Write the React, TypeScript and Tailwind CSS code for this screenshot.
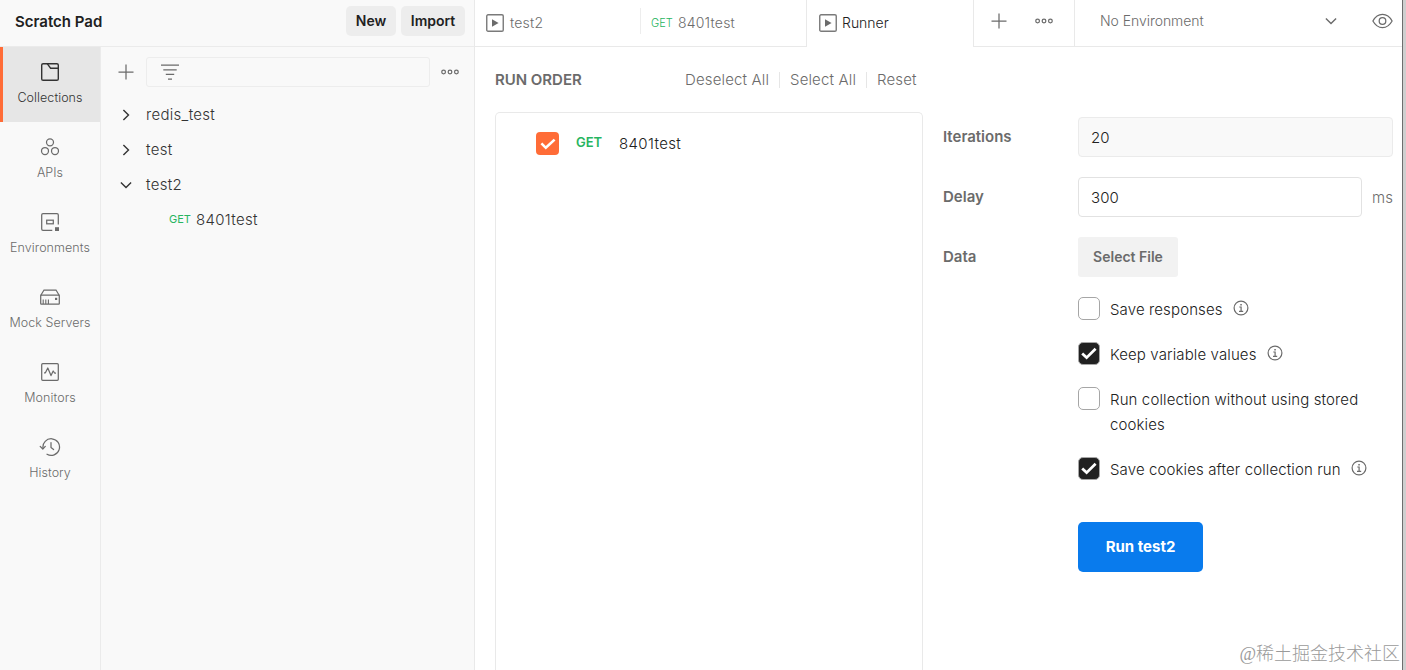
import type { ReactNode } from 'react';

type NavItem = { label: string; icon: ReactNode; active?: boolean };

const stroke = { fill: 'none', stroke: 'currentColor', strokeWidth: 1.25 } as const;

function CollectionsIcon() {
  return (
    <svg width="20" height="20" viewBox="0 0 20 20" {...stroke} strokeWidth={1.4}>
      <rect x="1.7" y="1.7" width="16.6" height="16.6" rx="1.4" />
      <path d="M7.2 1.7 L10.6 6.2 H18.3" />
    </svg>
  );
}

function ApisIcon() {
  return (
    <svg width="20" height="20" viewBox="0 0 20 20" {...stroke}>
      <circle cx="10" cy="5.3" r="3.5" />
      <circle cx="5" cy="14" r="3.5" />
      <circle cx="15" cy="14" r="3.5" />
    </svg>
  );
}

function EnvironmentsIcon() {
  return (
    <svg width="20" height="20" viewBox="0 0 20 20" {...stroke}>
      <path d="M12.3 18.3 H3 Q1.7 18.3 1.7 17 V3 Q1.7 1.7 3 1.7 H17 Q18.3 1.7 18.3 3 V12.5" />
      <rect x="6.7" y="8.2" width="6.6" height="3.6" />
      <rect x="15" y="15.2" width="4" height="3.8" fill="currentColor" stroke="none" />
    </svg>
  );
}

function MockServersIcon() {
  return (
    <svg width="22" height="20" viewBox="0 0 22 20" {...stroke}>
      <path d="M1.7 8.5 L5 3 H17 L20.3 8.5" />
      <rect x="1.7" y="8.2" width="18.6" height="8.8" rx="0.6" />
      <path d="M4.2 12.5 V17 M6.8 12.5 V17 M9.4 12.5 V17" strokeWidth="1.1" />
      <rect x="16" y="10.8" width="2.2" height="2.2" fill="currentColor" stroke="none" />
    </svg>
  );
}

function MonitorsIcon() {
  return (
    <svg width="20" height="20" viewBox="0 0 20 20" {...stroke}>
      <rect x="1.7" y="1.7" width="16.6" height="16.6" rx="1" />
      <path d="M4 10.8 H5.4 L7.8 6 L11 13.6 L13.2 9 L14.6 11 H16" strokeLinejoin="round" />
    </svg>
  );
}

function HistoryIcon() {
  return (
    <svg width="22" height="20" viewBox="0 0 22 20" {...stroke} strokeLinecap="round" strokeLinejoin="round">
      <path d="M4 11.2 A8.3 8.3 0 1 1 8 17.2" />
      <path d="M1.2 9.4 L3.8 12 L6.3 9.4" />
      <path d="M12 5.6 V10.6 L14.6 12.6" />
    </svg>
  );
}

function PlusIcon() {
  return (
    <svg width="16" height="16" viewBox="0 0 16 16" fill="none" stroke="#6b6b6b" strokeWidth="1.25">
      <path d="M8 0.5 V15.5 M0.5 8 H15.5" />
    </svg>
  );
}

function DotsIcon() {
  return (
    <svg width="18" height="6" viewBox="0 0 18 6" fill="none" stroke="#6b6b6b" strokeWidth="1.25">
      <circle cx="2.6" cy="3" r="1.85" />
      <circle cx="9" cy="3" r="1.85" />
      <circle cx="15.4" cy="3" r="1.85" />
    </svg>
  );
}

function PlayIcon() {
  return (
    <svg width="18" height="18" viewBox="0 0 18 18" className="shrink-0">
      <rect x="0.75" y="0.75" width="16.5" height="16.5" rx="1.3" fill="none" stroke="#7a7a7a" strokeWidth="1.4" />
      <path d="M6 5.2 L12.6 9 L6 12.8 Z" fill="#6b6b6b" />
    </svg>
  );
}

function Chevron({ open, color = '#333333' }: { open?: boolean; color?: string }) {
  return (
    <svg width="12" height="12" viewBox="0 0 12 12" fill="none" stroke={color} strokeWidth="1.4">
      <path d={open ? 'M0.9 3.4 L6 8.5 L11.1 3.4' : 'M3.4 0.9 L8.5 6 L3.4 11.1'} />
    </svg>
  );
}

function InfoIcon() {
  return (
    <svg width="16" height="16" viewBox="0 0 16 16" fill="none" stroke="#6b6b6b" strokeWidth="1.2" className="shrink-0">
      <circle cx="8" cy="8" r="6.9" />
      <path d="M6.3 7 H8.1 V11.2 M6 11.4 H10.2" />
      <rect x="7.3" y="4" width="1.5" height="1.5" fill="#6b6b6b" stroke="none" />
    </svg>
  );
}

function Check({ on }: { on?: boolean }) {
  return (
    <span
      className={
        on
          ? 'flex h-[23px] w-[22px] shrink-0 items-center justify-center rounded-[5px] border border-[#a6a6a6] bg-[#212121] pb-px pr-px'
          : 'h-[23px] w-[22px] shrink-0 rounded-[5px] border border-[#a6a6a6] bg-white'
      }
    >
      {on && (
        <svg width="16" height="13" viewBox="0 0 16 13" fill="none" stroke="#fff" strokeWidth="2.7">
          <path d="M1.2 6.4 L5.6 10.6 L14.6 1.8" />
        </svg>
      )}
    </span>
  );
}

const nav: NavItem[] = [
  { label: 'Collections', icon: <CollectionsIcon />, active: true },
  { label: 'APIs', icon: <ApisIcon /> },
  { label: 'Environments', icon: <EnvironmentsIcon /> },
  { label: 'Mock Servers', icon: <MockServersIcon /> },
  { label: 'Monitors', icon: <MonitorsIcon /> },
  { label: 'History', icon: <HistoryIcon /> },
];

const tree = [
  { name: 'redis_test', open: false },
  { name: 'test', open: false },
  { name: 'test2', open: true },
];

function Sidebar() {
  return (
    <aside className="flex w-[475px] shrink-0 flex-col border-r border-[#e9e9e9] bg-[#f9f9f9]">
      <header className="flex h-[47px] shrink-0 items-start border-b border-[#ebebeb] pl-[15px] pr-[9px]">
        <h1 className="mt-3 flex-1 text-[15px] font-semibold leading-5 text-[#212121]">Scratch Pad</h1>
        <div className="mt-[6px] flex gap-[5px] text-[14px] font-semibold leading-[30px] text-[#212121]">
          <button className="h-[30px] w-[50px] rounded-[5px] bg-[#ededed]">New</button>
          <button className="h-[30px] w-16 rounded-[5px] bg-[#ededed]">Import</button>
        </div>
      </header>
      <div className="flex min-h-0 flex-1">
        <nav className="w-[101px] shrink-0 border-r border-[#ebebeb]">
          {nav.map((item) => (
            <a
              key={item.label}
              className={
                item.active
                  ? 'flex h-[75px] flex-col items-center border-l-[3px] border-[#ff6c37] bg-[#e6e6e6] pr-[3px] pt-[15px] text-[#333333]'
                  : 'flex h-[75px] flex-col items-center pt-[15px] text-[#6b6b6b]'
              }
            >
              {item.icon}
              <span className="mt-[6px] whitespace-nowrap text-[12.5px] leading-5 tracking-[0.06px]">{item.label}</span>
            </a>
          ))}
        </nav>
        <div className="flex-1">
          <div className="flex items-center pl-[17px] pr-[15px] pt-[10px]">
            <PlusIcon />
            <div className="ml-3 flex h-[30px] w-[284px] items-center rounded-[3px] border border-[#ededed] pl-[14px]">
              <svg width="18" height="16" viewBox="0 0 18 16" stroke="#6b6b6b" strokeWidth="1.25">
                <path d="M0 1.2 H18 M2.3 5.8 H15.7 M4.8 10.4 H13.2 M7 15 H11" />
              </svg>
            </div>
            <div className="ml-[11px] flex">
              <DotsIcon />
            </div>
          </div>
          <ul className="mt-[10px] text-[15px] leading-[35px] tracking-[0.3px] text-[#333333]">
            {tree.map((node) => (
              <li key={node.name} className="flex h-[35px] items-center gap-[14px] pl-[19px]">
                <Chevron open={node.open} />
                <span>{node.name}</span>
              </li>
            ))}
            <li className="flex h-[35px] items-center pl-[68px]">
              <span className="w-[27px] text-[11px] font-normal tracking-normal text-[#27b561]">GET</span>
              <span>8401test</span>
            </li>
          </ul>
        </div>
      </div>
    </aside>
  );
}

function TabBar() {
  return (
    <div className="flex h-[47px] shrink-0 text-[14px] leading-[46px] text-[#6b6b6b]">
      <div className="flex w-[332px] border-b border-r border-[#e9e9e9] tracking-[0.2px]">
        <div className="flex w-[165px] items-center gap-[6px] pl-[11px]">
          <PlayIcon />
          <span>test2</span>
        </div>
        <div className="mt-2 h-[26px] w-px bg-[#ededed]" />
        <div className="flex flex-1 items-center pl-[10px]">
          <span className="w-[27px] text-[11px] tracking-normal text-[#27b561]">GET</span>
          <span>8401test</span>
        </div>
      </div>
      <div className="flex w-[166px] items-center gap-[5px] pb-px pl-3 text-[#212121]">
        <PlayIcon />
        <span>Runner</span>
      </div>
      <div className="flex w-[102px] items-center gap-7 border-x border-b border-[#e9e9e9] pb-1 pl-[17px]">
        <PlusIcon />
        <DotsIcon />
      </div>
      <div className="flex flex-1 items-center border-b border-[#e9e9e9] pb-1 pl-[25px] pr-[9px]">
        <span className="flex-1 tracking-[-0.05px]">No Environment</span>
        <Chevron open color="#6b6b6b" />
        <svg width="21" height="16" viewBox="0 0 21 16" fill="none" stroke="#6b6b6b" strokeWidth="1.25" className="-mt-px ml-[35px]">
          <path d="M0.9 8 C3.2 3.8 6.5 1.4 10.5 1.4 S17.8 3.8 20.1 8 C17.8 12.2 14.5 14.6 10.5 14.6 S3.2 12.2 0.9 8 Z" />
          <circle cx="10.5" cy="8" r="3.3" />
        </svg>
      </div>
    </div>
  );
}

function RunOrder() {
  return (
    <section className="flex w-[428px] shrink-0 flex-col">
      <div className="flex h-[65px] items-center text-[15px] leading-[65px] tracking-[0.15px] text-[#6b6b6b]">
        <h2 className="w-[190px] text-[15px] font-semibold tracking-[-0.03px]">RUN ORDER</h2>
        <span className="w-[94px]">Deselect All</span>
        <span className="h-4 w-px bg-[#e6e6e6]" />
        <span className="w-[86px] pl-[10px]">Select All</span>
        <span className="h-4 w-px bg-[#e6e6e6]" />
        <span className="pl-[10px]">Reset</span>
      </div>
      <div className="flex-1 rounded-t-[5px] border border-b-0 border-[#e9e9e9]">
        <div className="flex h-[61px] items-center pl-10">
          <span className="flex size-[23px] items-center justify-center rounded-[4px] bg-[#ff6c37]">
            <svg width="16" height="12" viewBox="0 0 16 12" fill="none" stroke="#fff" strokeWidth="2.6">
              <path d="M1.4 5.4 L5.8 9.8 L14.6 1.6" />
            </svg>
          </span>
          <span className="ml-[17px] w-[43px] pb-px text-[13px] font-semibold text-[#27b561]">GET</span>
          <span className="pt-px text-[15px] tracking-[0.35px] text-[#212121]">8401test</span>
        </div>
      </div>
    </section>
  );
}

function Option({ label, on, info, tall }: { label: string; on?: boolean; info?: boolean; tall?: boolean }) {
  return (
    <div className={tall ? 'flex h-[70px] gap-[10px]' : 'flex h-[45px] gap-[10px]'}>
      <Check on={on} />
      <span className={tall ? 'w-[260px] leading-[25px]' : 'whitespace-nowrap leading-[25px]'}>{label}</span>
      {info && (
        <span className="mt-[3px] flex">
          <InfoIcon />
        </span>
      )}
    </div>
  );
}

function Settings() {
  return (
    <section className="flex-1 pl-5 pt-[70px] text-[15px] leading-10 tracking-[0.12px] text-[#212121]">
      <div className="flex h-[60px]">
        <label className="w-[135px] font-semibold tracking-normal text-[#6b6b6b]">Iterations</label>
        <div className="h-10 w-[315px] rounded-[4px] border border-[#ebebeb] bg-[#f9f9f9] pl-3 leading-10">20</div>
      </div>
      <div className="flex h-[60px]">
        <label className="w-[135px] font-semibold tracking-normal text-[#6b6b6b]">Delay</label>
        <div className="h-10 w-[284px] rounded-[4px] border border-[#e2e2e2] bg-white pl-3 leading-10">300</div>
        <span className="ml-[10px] leading-[42px] text-[#6b6b6b]">ms</span>
      </div>
      <div className="flex h-[60px]">
        <label className="w-[135px] font-semibold tracking-normal text-[#6b6b6b]">Data</label>
        <button className="h-10 w-[100px] rounded-[3px] bg-[#f2f2f2] text-[14px] font-semibold leading-10 tracking-normal text-[#6b6b6b]">
          Select File
        </button>
      </div>
      <div className="pl-[135px]">
        <Option label="Save responses" info />
        <Option label="Keep variable values" on info />
        <Option label="Run collection without using stored cookies" tall />
        <Option label="Save cookies after collection run" on info />
        <button className="mt-[20px] h-[50px] w-[125px] rounded-[5px] bg-[#097bed] text-[15px] font-bold tracking-normal text-white">
          Run test2
        </button>
      </div>
    </section>
  );
}

export default function App() {
  return (
    <div className="relative flex h-[670px] w-[1406px] overflow-hidden bg-white font-['Inter','Noto_Sans_CJK_SC',sans-serif] font-[350]">
      <Sidebar />
      <main className="flex min-w-0 flex-1 flex-col">
        <TabBar />
        <div className="flex min-h-0 flex-1 pl-5">
          <RunOrder />
          <Settings />
        </div>
      </main>
      <div className="w-1 shrink-0 border-l border-[#6e6e6e] bg-[#cfcfcf]" />
      <span className="absolute bottom-[3px] right-[6px] whitespace-nowrap font-['Liberation_Serif','Noto_Sans_CJK_SC',serif] text-[18px] font-light leading-[26px] text-[#9a9a9a]">
        @稀土掘金技术社区
      </span>
    </div>
  );
}
